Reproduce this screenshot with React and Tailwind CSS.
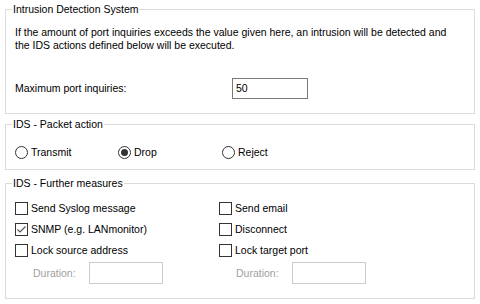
import React from "react";

function Check({ checked, label }) {
  return (
    <div className="flex items-center h-[13px]">
      <span className="w-[13px] h-[13px] border border-[#333333] bg-white flex items-center justify-center shrink-0">
        {checked && (
          <svg width="11" height="11" viewBox="0 0 11 11">
            <path d="M1.5 5.5 L4 8 L9.5 2.5" fill="none" stroke="#555555" strokeWidth="1.2" />
          </svg>
        )}
      </span>
      <span className="ml-[3px] whitespace-nowrap">{label}</span>
    </div>
  );
}

function Radio({ checked, label }) {
  return (
    <div className="flex items-center h-[13px]">
      <span className="w-[13px] h-[13px] rounded-full border border-[#333333] bg-white flex items-center justify-center shrink-0">
        {checked && <span className="w-[7px] h-[7px] rounded-full bg-[#333333]" />}
      </span>
      <span className="ml-[3px] whitespace-nowrap">{label}</span>
    </div>
  );
}

function Duration() {
  return (
    <div className="flex items-center h-[22px]">
      <span className="ml-[18px] w-[56px] text-[#a0a0a0]">Duration:</span>
      <span className="w-[74px] h-[22px] border border-[#cccccc] bg-white" />
    </div>
  );
}

export default function App() {
  return (
    <div className="w-[480px] h-[304px] bg-white px-[5px] pt-[3px] font-['Liberation_Sans',Arial,sans-serif] text-[10.5px] leading-[13px] text-black overflow-hidden">
      <fieldset className="border border-[#dcdcdc] h-[111px] pl-[9px] pr-[9px]">
        <legend className="ml-[-3px] px-[1px] leading-[13px]">Intrusion Detection System</legend>
        <p className="mt-[10px] w-[450px]">
          If the amount of port inquiries exceeds the value given here, an intrusion will be detected and
          <br />
          the IDS actions defined below will be executed.
        </p>
        <div className="mt-[26px] flex items-center h-[21px]">
          <span className="w-[217px]">Maximum port inquiries:</span>
          <span className="w-[76px] h-[21px] border border-[#7a7a7a] pl-[3px] flex items-center">50</span>
        </div>
      </fieldset>

      <fieldset className="mt-[4px] border border-[#dcdcdc] h-[52px] pl-[9px]">
        <legend className="ml-[-3px] px-[1px] leading-[13px]">IDS - Packet action</legend>
        <div className="mt-[15px] flex items-center">
          <div className="w-[103px]"><Radio label="Transmit" /></div>
          <div className="w-[104px]"><Radio checked label="Drop" /></div>
          <div><Radio label="Reject" /></div>
        </div>
      </fieldset>

      <fieldset className="mt-[7px] border border-[#dcdcdc] h-[122px] pl-[9px]">
        <legend className="ml-[-3px] px-[1px] leading-[13px]">IDS - Further measures</legend>
        <div className="mt-[12px] grid grid-cols-[204px_1fr] gap-y-[8px]">
          <Check label="Send Syslog message" />
          <Check label="Send email" />
          <Check checked label="SNMP (e.g. LANmonitor)" />
          <Check label="Disconnect" />
          <Check label="Lock source address" />
          <Check label="Lock target port" />
        </div>
        <div className="mt-[5px] grid grid-cols-[204px_1fr]">
          <Duration />
          <div className="-ml-[1px]"><Duration /></div>
        </div>
      </fieldset>
    </div>
  );
}
